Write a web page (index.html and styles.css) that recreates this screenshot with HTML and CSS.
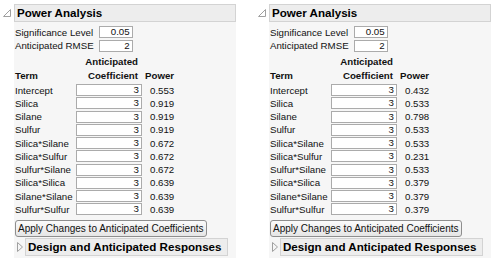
FILE: index.html
```html
<!DOCTYPE html>
<html>
	<head>
		<meta charset=utf-8>
		<title>Power Analysis</title>
		<link rel="stylesheet" href="styles.css">
	</head>
	<body>
		<div class="page">
			<div class="report">
				<div class="outline-head">
					<svg class="disc" width="8" height="8"><path d="M7.5 0.5 V7.5 H0.5 Z" fill="none" stroke="#a0a0a0"/></svg>
					<div class="title">Power Analysis</div>
				</div>
				<div class="outline-body">
					<div class="params">
						<span>Significance Level</span><span class="field">0.05</span>
						<span>Anticipated RMSE</span><span class="field">2</span>
					</div>
					<div class="coef">
						<div class="th term">Term</div>
						<div class="th coef-head">Anticipated<br>Coefficient</div>
						<div class="th power-head">Power</div>

						<div class="term">Intercept</div><div class="cell"><span class="field">3</span></div><div class="power">0.553</div>
						<div class="term">Silica</div><div class="cell"><span class="field">3</span></div><div class="power">0.919</div>
						<div class="term">Silane</div><div class="cell"><span class="field">3</span></div><div class="power">0.919</div>
						<div class="term">Sulfur</div><div class="cell"><span class="field">3</span></div><div class="power">0.919</div>
						<div class="term">Silica*Silane</div><div class="cell"><span class="field">3</span></div><div class="power">0.672</div>
						<div class="term">Silica*Sulfur</div><div class="cell"><span class="field">3</span></div><div class="power">0.672</div>
						<div class="term">Sulfur*Silane</div><div class="cell"><span class="field">3</span></div><div class="power">0.672</div>
						<div class="term">Silica*Silica</div><div class="cell"><span class="field">3</span></div><div class="power">0.639</div>
						<div class="term">Silane*Silane</div><div class="cell"><span class="field">3</span></div><div class="power">0.639</div>
						<div class="term">Sulfur*Sulfur</div><div class="cell"><span class="field">3</span></div><div class="power">0.639</div>
					</div>
					<button class="apply">Apply Changes to Anticipated Coefficients</button>
					<div class="sub-head">
						<svg class="disc" width="6" height="10"><path d="M0.5 0.5 L5.5 5 L0.5 9.5 Z" fill="none" stroke="#a0a0a0"/></svg>
						<div class="title">Design and Anticipated Responses</div>
					</div>
				</div>
			</div>

			<div class="report">
				<div class="outline-head">
					<svg class="disc" width="8" height="8"><path d="M7.5 0.5 V7.5 H0.5 Z" fill="none" stroke="#a0a0a0"/></svg>
					<div class="title">Power Analysis</div>
				</div>
				<div class="outline-body">
					<div class="params">
						<span>Significance Level</span><span class="field">0.05</span>
						<span>Anticipated RMSE</span><span class="field">2</span>
					</div>
					<div class="coef">
						<div class="th term">Term</div>
						<div class="th coef-head">Anticipated<br>Coefficient</div>
						<div class="th power-head">Power</div>

						<div class="term">Intercept</div><div class="cell"><span class="field">3</span></div><div class="power">0.432</div>
						<div class="term">Silica</div><div class="cell"><span class="field">3</span></div><div class="power">0.533</div>
						<div class="term">Silane</div><div class="cell"><span class="field">3</span></div><div class="power">0.798</div>
						<div class="term">Sulfur</div><div class="cell"><span class="field">3</span></div><div class="power">0.533</div>
						<div class="term">Silica*Silane</div><div class="cell"><span class="field">3</span></div><div class="power">0.533</div>
						<div class="term">Silica*Sulfur</div><div class="cell"><span class="field">3</span></div><div class="power">0.231</div>
						<div class="term">Sulfur*Silane</div><div class="cell"><span class="field">3</span></div><div class="power">0.533</div>
						<div class="term">Silica*Silica</div><div class="cell"><span class="field">3</span></div><div class="power">0.379</div>
						<div class="term">Silane*Silane</div><div class="cell"><span class="field">3</span></div><div class="power">0.379</div>
						<div class="term">Sulfur*Sulfur</div><div class="cell"><span class="field">3</span></div><div class="power">0.379</div>
					</div>
					<button class="apply">Apply Changes to Anticipated Coefficients</button>
					<div class="sub-head">
						<svg class="disc" width="6" height="10"><path d="M0.5 0.5 L5.5 5 L0.5 9.5 Z" fill="none" stroke="#a0a0a0"/></svg>
						<div class="title">Design and Anticipated Responses</div>
					</div>
				</div>
			</div>
		</div>
	</body>
</html>
```
FILE: styles.css
```css
body {
	margin: 0;
	background: #fff;
	font-family: "Liberation Sans", Arial, sans-serif;
	font-size: 9.7px;
	color: #111;
	overflow: hidden;
}
.page { display: flex; gap: 19px; padding-top: 4px; height: 254px; }
.report { width: 236px; display: flex; flex-direction: column; }

.outline-head { display: grid; grid-template-columns: 14px 1fr; }
.disc { align-self: center; justify-self: center; }
.title {
	height: 18px;
	box-sizing: border-box;
	border: 1px solid #d3d3d3;
	background: #ededed;
	font-weight: bold;
	font-size: 11.6px;
	line-height: 16px;
	padding-left: 2px;
	color: #000;
	white-space: nowrap;
}

.outline-body {
	flex: 1;
	margin-left: 14px;
	padding: 4px 0 0 1px;
	background: #f6f6f6;
}

.params {
	display: grid;
	grid-template-columns: max-content 34px;
	grid-auto-rows: 12px;
	column-gap: 5px;
	row-gap: 1.5px;
	align-items: center;
}
.field {
	display: block;
	height: 12px;
	box-sizing: border-box;
	border: 1px solid #ababab;
	background: #fff;
	text-align: right;
	padding-right: 2px;
	line-height: 10px;
}

.coef {
	display: grid;
	grid-template-columns: 61px 66px 50px;
	grid-template-rows: 29px repeat(10, 13.25px);
	margin-top: 3px;
}
.th { font-weight: bold; line-height: 14.5px; align-self: end; }
.coef-head { text-align: right; padding-right: 4px; }
.power-head { padding-left: 3px; }
.term { line-height: 13.25px; white-space: nowrap; }
.th.term { line-height: 14.5px; }
.cell { padding-top: 0.6px; }
.power { line-height: 13.25px; padding-left: 8px; }

.apply {
	display: block;
	margin: 3.5px 0 0;
	height: 17px;
	padding: 0 2px;
	font: inherit;
	font-size: 10px;
	color: #111;
	border: 1px solid #8e8e8e;
	border-radius: 3px;
	background: linear-gradient(#fbfbfb, #e5e5e5);
}

.sub-head {
	display: grid;
	grid-template-columns: 10px 1fr;
	margin: 1.5px 8px 0 0;
}
```
